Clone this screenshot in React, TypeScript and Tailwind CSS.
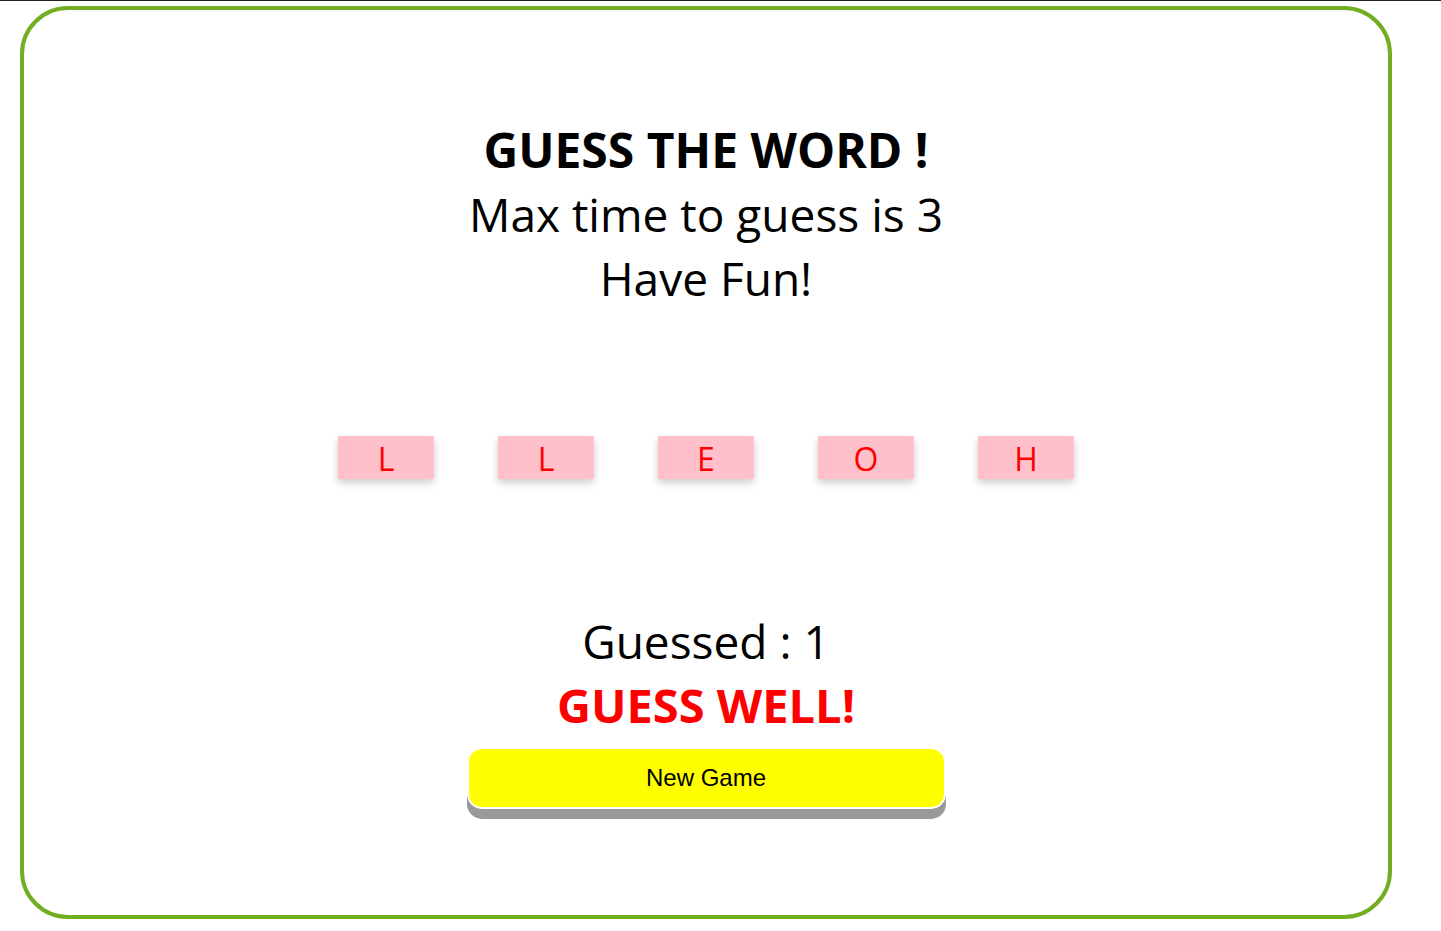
import { useState } from "react";

const word = ["L", "L", "E", "O", "H"];

export default function App() {
  const [guessed] = useState(1);

  return (
    <div className="min-h-[931px] w-full border-t border-[#222] bg-white font-['Open_Sans',sans-serif] text-black">
      <div className="ml-[20px] mt-[5px] flex h-[913px] w-[1372px] flex-col items-center rounded-[48px] border-4 border-[#73AD21] pt-[108px]">
        {/* Header */}
        <div className="flex flex-col items-center text-[46px] leading-[64px]">
          <h1 className="text-[48px] font-bold">GUESS THE WORD !</h1>
          <p>Max time to guess is 3</p>
          <p>Have Fun!</p>
        </div>

        {/* Scrambled letters */}
        <div className="mt-[126px] flex gap-[64px]">
          {word.map((letter, i) => (
            <div
              key={i}
              className="flex h-[43px] w-[96px] items-center justify-center bg-[#FFC0CB] pt-[2px] text-[32px] leading-[43px] text-[#FF0000] shadow-[0_4px_8px_rgba(0,0,0,0.2)]"
            >
              {letter}
            </div>
          ))}
        </div>

        {/* Status */}
        <div className="mt-[130px] flex flex-col items-center text-[46px] leading-[64px]">
          <p>Guessed : {guessed}</p>
          <p className="text-[47px] font-bold text-[#FF0000]">GUESS WELL!</p>
        </div>

        <button className="mt-[10px] h-[62px] w-[479px] rounded-[15px] border-2 border-white bg-[#FFFF00] font-['Liberation_Sans',sans-serif] text-[24px] text-black shadow-[0_10px_0_#999]">
          New Game
        </button>
      </div>
    </div>
  );
}
